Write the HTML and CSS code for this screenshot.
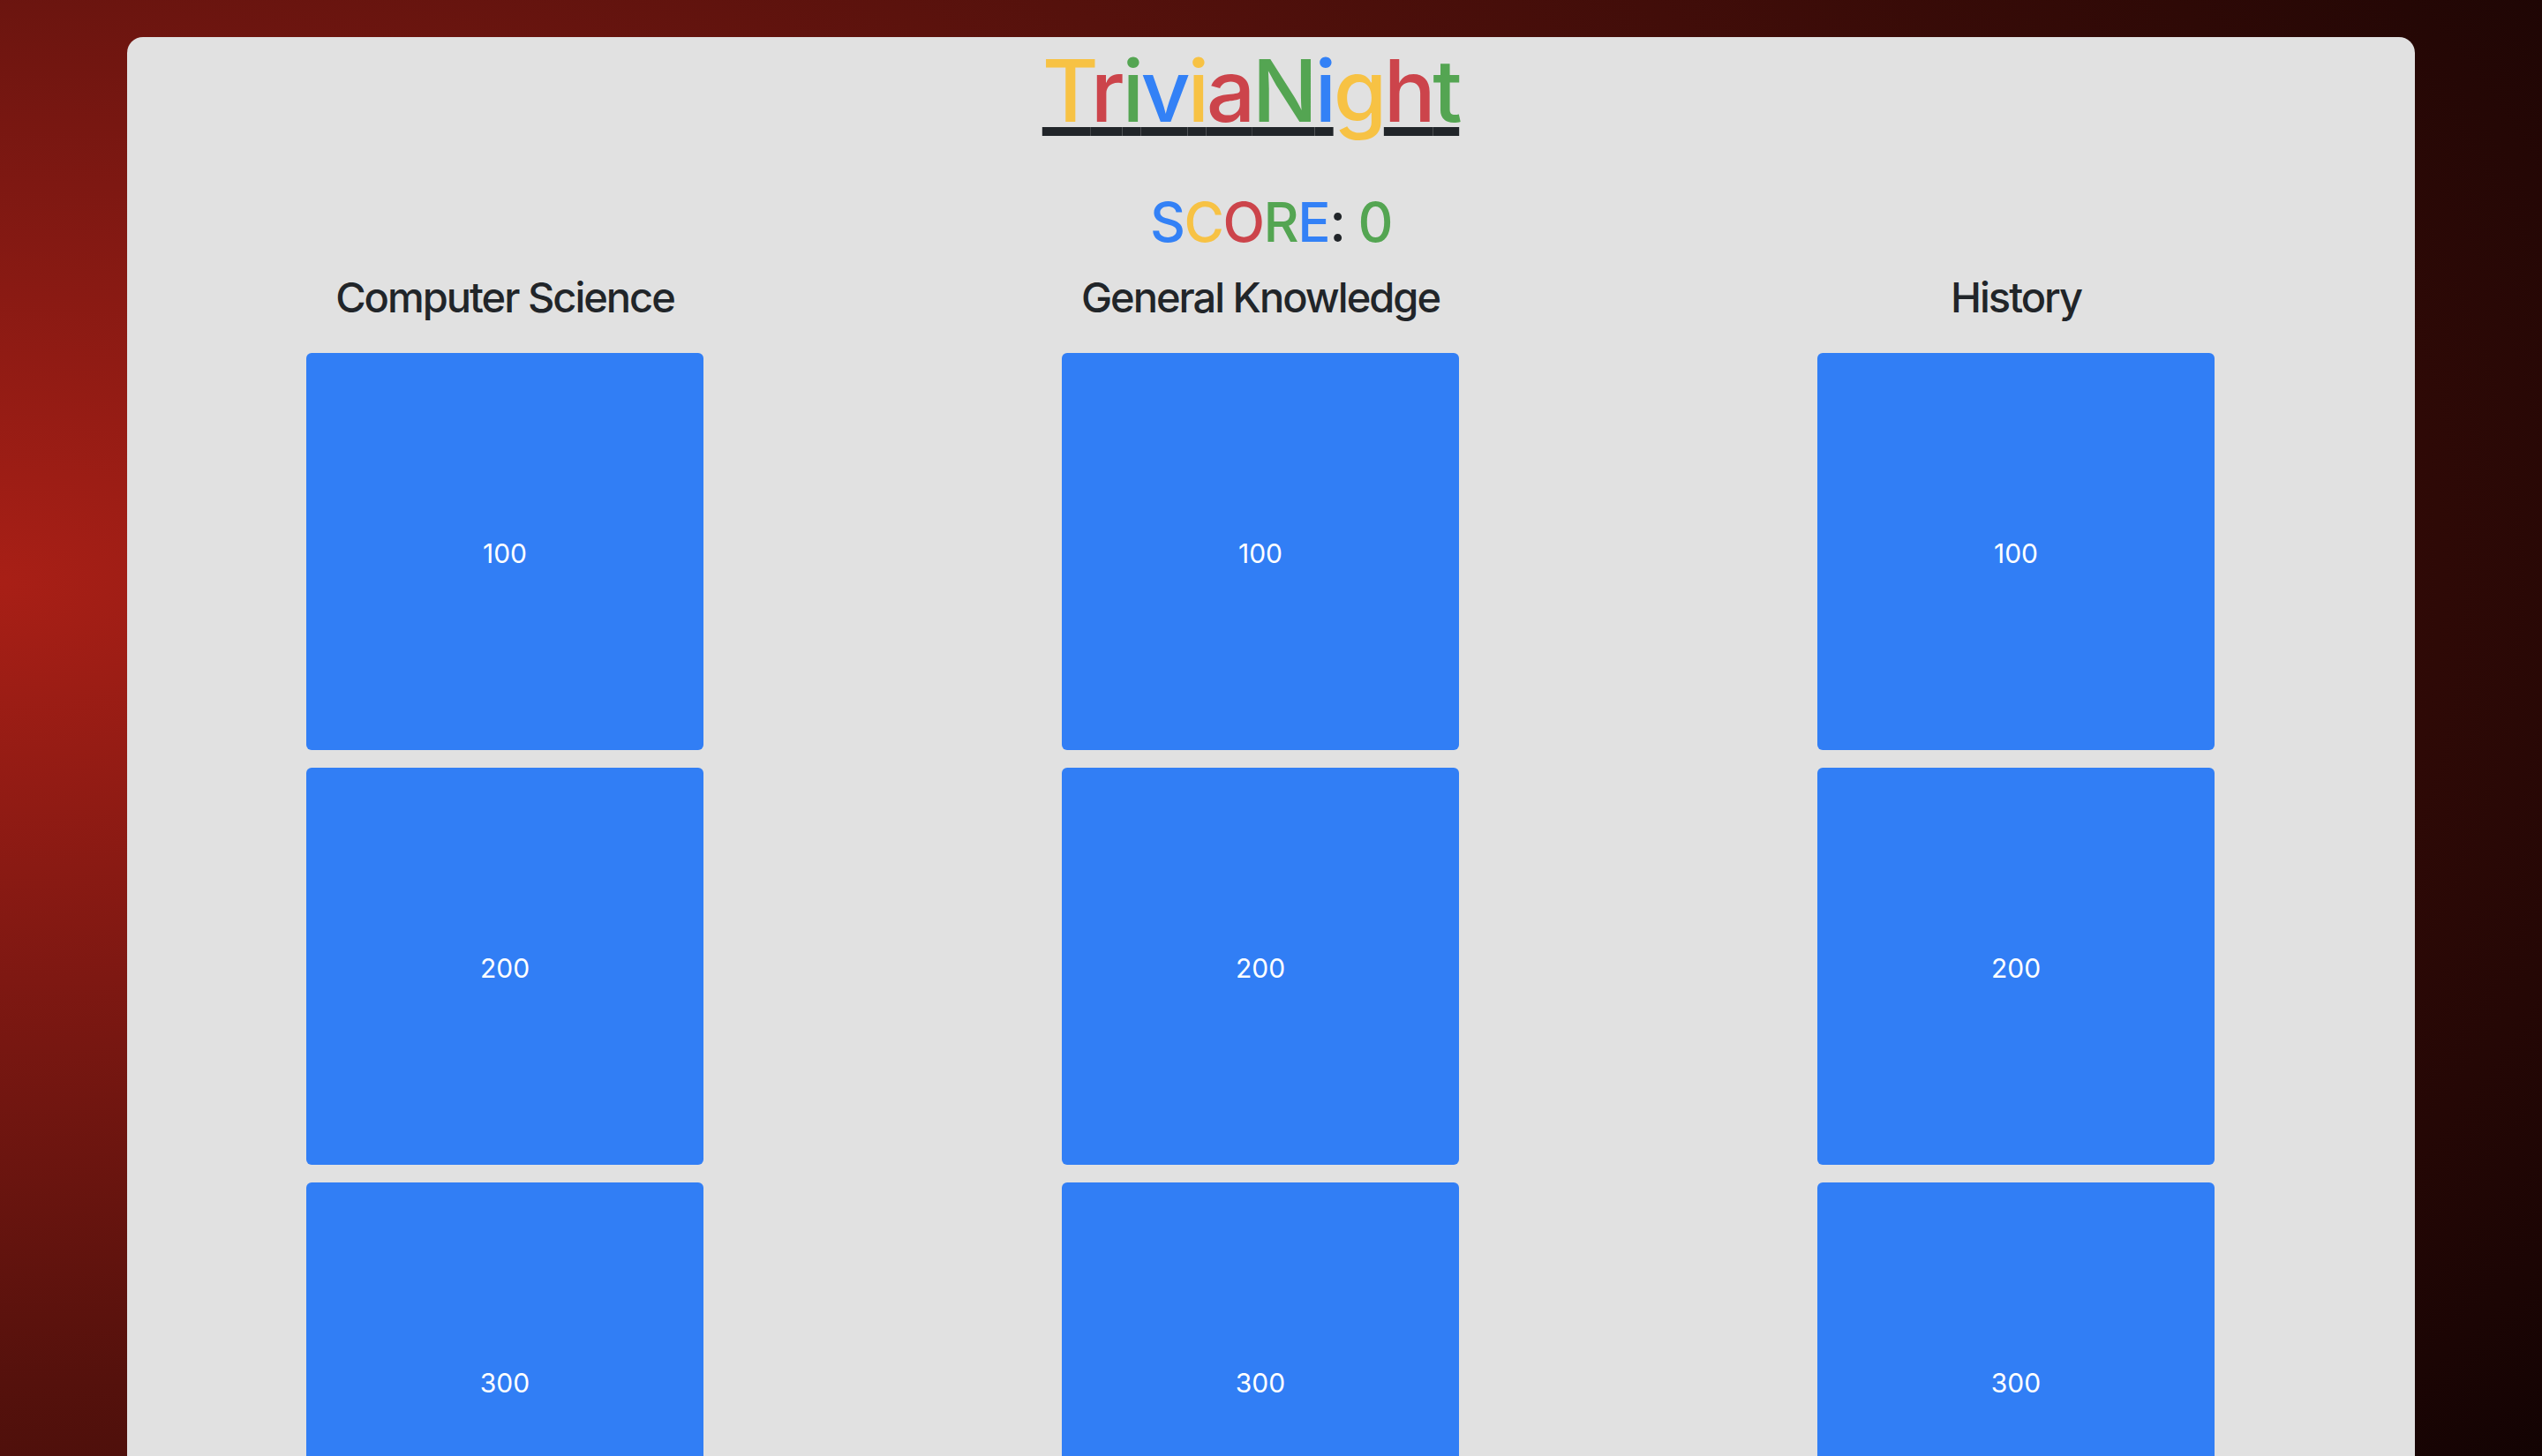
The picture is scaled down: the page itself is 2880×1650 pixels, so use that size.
FILE: index.html
```html
<!DOCTYPE html>
<html lang="en">
<head>
    <meta charset="UTF-8">
    <meta name="viewport" content="width=device-width, initial-scale=1.0">
    <title>TriviaNight</title>
    <link rel="stylesheet" href="styles.css">
</head>
<body>
    <div class="board">
        <h1 class="title">
            <a href="#" class="title-link"><span class="yellow">T</span><span class="red">r</span><span class="green">i</span><span class="blue">v</span><span class="yellow">i</span><span class="red">a</span><span class="green">N</span><span class="blue">i</span><span class="yellow">g</span><span class="red">h</span><span class="green">t</span></a>
        </h1>

        <h2 class="score">
            <span class="blue">S</span><span class="yellow">C</span><span class="red">O</span><span class="green">R</span><span class="blue">E</span>: <span class="green" id="score">0</span>
        </h2>

        <div class="categories">
            <div class="category">
                <h3>Computer Science</h3>
                <button class="tile">100</button>
                <button class="tile">200</button>
                <button class="tile">300</button>
                <button class="tile">400</button>
                <button class="tile">500</button>
            </div>
            <div class="category">
                <h3>General Knowledge</h3>
                <button class="tile">100</button>
                <button class="tile">200</button>
                <button class="tile">300</button>
                <button class="tile">400</button>
                <button class="tile">500</button>
            </div>
            <div class="category">
                <h3>History</h3>
                <button class="tile">100</button>
                <button class="tile">200</button>
                <button class="tile">300</button>
                <button class="tile">400</button>
                <button class="tile">500</button>
            </div>
        </div>
    </div>
</body>
</html>
```

FILE: styles.css
```css
html, body {
    margin: 0;
    min-height: 100%;
}
body {
    background: radial-gradient(ellipse 120% 110% at 0% 40%, #a81f16 0%, #7e1812 25%, #55110c 50%, #2e0906 80%, #120303 100%);
    background-attachment: fixed;
    font-family: Inter, "Noto Sans", sans-serif;
    color: #212529;
    padding-top: 42px;
}
.board {
    width: 90%;
    margin: 0 auto;
    background-color: #e1e1e1;
    border-radius: 18px;
    padding: 2px 0 60px 0;
    box-sizing: border-box;
    text-align: center;
}
.title {
    margin: 0 0 53px 0;
    padding-right: 46px;
    font-size: 98px;
    font-weight: 500;
    line-height: 1.2;
    letter-spacing: -3.5px;
}
.title-link {
    color: #212529;
    text-decoration: underline;
    text-decoration-thickness: 10px;
    text-underline-offset: 6px;
}
.score {
    margin: 0 0 20px 0;
    font-size: 62px;
    font-weight: 500;
    line-height: 1.2;
    letter-spacing: -1.5px;
}
.yellow { color: #f7c244; }
.red { color: #cc444b; }
.green { color: #54a552; }
.blue { color: #3381f6; }

.categories {
    display: grid;
    grid-template-columns: repeat(3, 1fr);
    margin-right: 24px;
}
.category {
    display: flex;
    flex-direction: column;
    align-items: center;
    gap: 20px;
}
.category h3 {
    margin: 0 0 15px 0;
    font-size: 47px;
    font-weight: 500;
    line-height: 1.2;
    letter-spacing: -2px;
}
.tile {
    width: 450px;
    height: 450px;
    border: none;
    border-radius: 6px;
    padding-top: 4px;
    background-color: #317ef5;
    color: #fff;
    font-family: Inter, "Noto Sans", sans-serif;
    font-size: 30px;
    cursor: pointer;
}
```
